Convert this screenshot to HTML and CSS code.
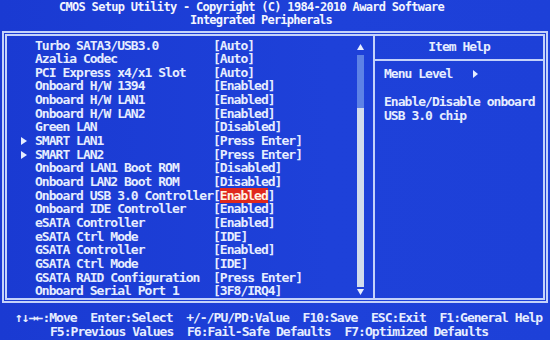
FILE: index.html
```html
<!DOCTYPE html>
<html>
<head>
<meta charset="utf-8">
<link rel="stylesheet" href="styles.css">
</head>
<body>
<div class="screen">
  <header class="header">
    <div class="title t1">CMOS Setup Utility - Copyright (C) 1984-2010 Award Software</div>
    <div class="title t2">Integrated Peripherals</div>
  </header>
  <main class="box">
    <section class="left">
      <div class="list">
        <div class="row"><span class="mark"></span><span class="label">Turbo SATA3/USB3.0</span><span class="val">[Auto]</span></div>
        <div class="row"><span class="mark"></span><span class="label">Azalia Codec</span><span class="val">[Auto]</span></div>
        <div class="row"><span class="mark"></span><span class="label">PCI Express x4/x1 Slot</span><span class="val">[Auto]</span></div>
        <div class="row"><span class="mark"></span><span class="label">Onboard H/W 1394</span><span class="val">[Enabled]</span></div>
        <div class="row"><span class="mark"></span><span class="label">Onboard H/W LAN1</span><span class="val">[Enabled]</span></div>
        <div class="row"><span class="mark"></span><span class="label">Onboard H/W LAN2</span><span class="val">[Enabled]</span></div>
        <div class="row"><span class="mark"></span><span class="label">Green LAN</span><span class="val">[Disabled]</span></div>
        <div class="row"><span class="mark"><svg class="tri" width="6" height="8" viewBox="0 0 6 8"><polygon points="0,0 6,4 0,8"/></svg></span><span class="label">SMART LAN1</span><span class="val">[Press Enter]</span></div>
        <div class="row"><span class="mark"><svg class="tri" width="6" height="8" viewBox="0 0 6 8"><polygon points="0,0 6,4 0,8"/></svg></span><span class="label">SMART LAN2</span><span class="val">[Press Enter]</span></div>
        <div class="row"><span class="mark"></span><span class="label">Onboard LAN1 Boot ROM</span><span class="val">[Disabled]</span></div>
        <div class="row"><span class="mark"></span><span class="label">Onboard LAN2 Boot ROM</span><span class="val">[Disabled]</span></div>
        <div class="row"><span class="mark"></span><span class="label">Onboard USB 3.0 Controller</span><span class="val">[<span class="sel">Enabled</span>]</span></div>
        <div class="row"><span class="mark"></span><span class="label">Onboard IDE Controller</span><span class="val">[Enabled]</span></div>
        <div class="row"><span class="mark"></span><span class="label">eSATA Controller</span><span class="val">[Enabled]</span></div>
        <div class="row"><span class="mark"></span><span class="label">eSATA Ctrl Mode</span><span class="val">[IDE]</span></div>
        <div class="row"><span class="mark"></span><span class="label">GSATA Controller</span><span class="val">[Enabled]</span></div>
        <div class="row"><span class="mark"></span><span class="label">GSATA Ctrl Mode</span><span class="val">[IDE]</span></div>
        <div class="row"><span class="mark"></span><span class="label">GSATA RAID Configuration</span><span class="val">[Press Enter]</span></div>
        <div class="row"><span class="mark"></span><span class="label">Onboard Serial Port 1</span><span class="val">[3F8/IRQ4]</span></div>
      </div>
      <div class="scroll">
        <svg class="arrow" width="7" height="6" viewBox="0 0 7 6"><polygon points="3.5,0 7,6 0,6"/></svg>
        <div class="track"></div>
        <div class="thumb"></div>
        <svg class="arrow down" width="7" height="6" viewBox="0 0 7 6"><polygon points="0,0 7,0 3.5,6"/></svg>
      </div>
    </section>
    <aside class="help">
      <div class="help-head">Item Help</div>
      <div class="help-body">
        <div class="hl"><span class="txt">Menu Level   </span><svg class="tri" width="5" height="8" viewBox="0 0 5 8"><polygon points="0,0 5,4 0,8"/></svg></div>
        <div class="hl"></div>
        <div class="hl"><span class="txt">Enable/Disable onboard</span></div>
        <div class="hl"><span class="txt">USB 3.0 chip</span></div>
      </div>
    </aside>
  </main>
  <footer class="footer">
    <div class="f1">↑↓→←:Move  Enter:Select  +/-/PU/PD:Value  F10:Save  ESC:Exit  F1:General Help</div>
    <div class="f2">F5:Previous Values  F6:Fail-Safe Defaults  F7:Optimized Defaults</div>
  </footer>
</div>
</body>
</html>
```
FILE: styles.css
```css
html, body {
  margin: 0;
  padding: 0;
}
body {
  width: 550px;
  height: 340px;
  overflow: hidden;
  background: #1c3ed6;
}
.screen {
  width: 550px;
  height: 340px;
  background: linear-gradient(90deg, #1a3ad2 0%, #1e41d9 60%, #1d40d8 100%);
  color: #e6edff;
  font-family: "DejaVu Sans Mono", "Liberation Mono", monospace;
  font-weight: bold;
  font-size: 13px;
  letter-spacing: -0.98px;
}
.header {
  padding-top: 1px;
  line-height: 13px;
}
.title {
  color: #f2f5ff;
  white-space: pre;
  height: 13px;
  font-size: 12px;
}
.t1 {
  padding-left: 59px;
  letter-spacing: -0.7px;
}
.t2 {
  padding-left: 190px;
  letter-spacing: -0.77px;
}
.box {
  margin: 4px 2px 0 2px;
  height: 262px;
  border: 5px double #c4d2fa;
  display: flex;
}
.left {
  width: 366px;
  display: flex;
  border-right: 2px solid #c4d2fa;
}
.list {
  flex: 1;
  padding-top: 2.5px;
}
.row {
  display: flex;
  height: 13.67px;
  line-height: 13.67px;
}
.mark {
  width: 28px;
  flex: none;
  box-sizing: border-box;
  padding-left: 14px;
  display: flex;
  align-items: center;
}
.tri {
  fill: #e6edff;
  display: inline-block;
}
.label {
  width: 178px;
  flex: none;
  white-space: pre;
}
.val {
  white-space: pre;
}
.sel {
  background: #e0281c;
  color: #fff4e4;
}
.scroll {
  width: 7px;
  margin-right: 9px;
  padding-top: 8px;
  display: flex;
  flex-direction: column;
}
.arrow {
  fill: #e8eeff;
  display: block;
}
.track {
  margin-top: 5px;
  height: 53px;
  background: #5d82e6;
}
.thumb {
  height: 179px;
  background: #d2dcec;
}
.arrow.down {
  margin-top: 2px;
}
.help {
  flex: 1;
  display: flex;
  flex-direction: column;
}
.help-head {
  height: 23px;
  line-height: 21px;
  text-align: center;
  border-bottom: 2px solid #c4d2fa;
}
.help-body {
  padding: 6px 0 0 9px;
}
.hl {
  line-height: 14px;
  height: 14px;
  display: flex;
  align-items: center;
}
.txt {
  white-space: pre;
}
.footer {
  margin-top: 8px;
  line-height: 14px;
}
.f1 {
  padding-left: 15px;
  white-space: pre;
}
.f2 {
  padding-left: 50px;
  white-space: pre;
}
```
